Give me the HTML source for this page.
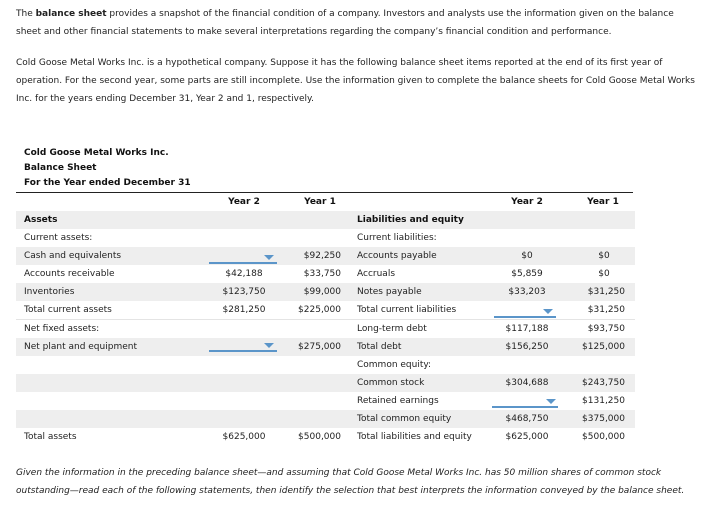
<!DOCTYPE html>
<html><head><meta charset="utf-8"><style>
*{margin:0;padding:0;box-sizing:border-box}
body{width:721px;height:526px;background:#fff;font-family:"DejaVu Sans","Liberation Sans",sans-serif;font-size:9px;color:#222;position:relative;overflow:hidden}
.p{position:absolute;left:16px;line-height:18px;white-space:nowrap}
.t{position:absolute;white-space:nowrap;line-height:18px}
.c2{position:absolute;width:80px;margin-left:-40px;text-align:center;white-space:nowrap;line-height:18px}
.row{position:absolute;left:16px;width:619px;height:18px}
.g{background:#eeeeee}
.dd{position:absolute;height:2px;background:#5b95c9}
.tri{position:absolute;width:0;height:0;border-left:5px solid transparent;border-right:5px solid transparent;border-top:5px solid #5b95c9}
b{font-weight:bold}
</style></head><body>
<div class="p" style="top:5px">The <b>balance sheet</b> provides a snapshot of the financial condition of a company. Investors and analysts use the information given on the balance<br>sheet and other financial statements to make several interpretations regarding the company’s financial condition and performance.</div>
<div class="p" style="top:54px">Cold Goose Metal Works Inc. is a hypothetical company. Suppose it has the following balance sheet items reported at the end of its first year of<br>operation. For the second year, some parts are still incomplete. Use the information given to complete the balance sheets for Cold Goose Metal Works<br>Inc. for the years ending December 31, Year 2 and 1, respectively.</div>

<div class="t" style="left:24px;top:146px;line-height:15px;font-weight:bold;color:#111">Cold Goose Metal Works Inc.<br>Balance Sheet<br>For the Year ended December 31</div>
<div style="position:absolute;left:16px;top:192px;width:617px;height:1px;background:#222"></div>
<div class="c2" style="left:244px;top:193px;font-weight:bold;color:#111">Year 2</div>
<div class="c2" style="left:320px;top:193px;font-weight:bold;color:#111">Year 1</div>
<div class="c2" style="left:527px;top:193px;font-weight:bold;color:#111">Year 2</div>
<div class="c2" style="left:603px;top:193px;font-weight:bold;color:#111">Year 1</div>

<div class="row g" style="top:211px"></div>
<div class="row g" style="top:247px"></div>
<div class="row g" style="top:283px"></div>
<div style="position:absolute;left:16px;top:319px;width:619px;height:1px;background:#e4e4e4"></div>
<div class="row g" style="top:338px"></div>
<div class="row g" style="top:374px"></div>
<div class="row g" style="top:410px"></div>

<div class="t" style="left:24px;top:211px;font-weight:bold;color:#111">Assets</div>
<div class="t" style="left:24px;top:229px">Current assets:</div>
<div class="t" style="left:24px;top:247px">Cash and equivalents</div>
<div class="t" style="left:24px;top:265px">Accounts receivable</div>
<div class="t" style="left:24px;top:283px">Inventories</div>
<div class="t" style="left:24px;top:301px">Total current assets</div>
<div class="t" style="left:24px;top:320px">Net fixed assets:</div>
<div class="t" style="left:24px;top:338px">Net plant and equipment</div>
<div class="t" style="left:24px;top:428px">Total assets</div>

<div class="dd" style="left:209px;top:262px;width:68px"></div><div class="tri" style="left:264px;top:255px"></div>
<div class="c2" style="left:244px;top:265px">$42,188</div>
<div class="c2" style="left:244px;top:283px">$123,750</div>
<div class="c2" style="left:244px;top:301px">$281,250</div>
<div class="dd" style="left:209px;top:350px;width:68px"></div><div class="tri" style="left:264px;top:343px"></div>
<div class="c2" style="left:244px;top:428px">$625,000</div>

<div class="t" style="right:380px;top:247px">$92,250</div>
<div class="t" style="right:380px;top:265px">$33,750</div>
<div class="t" style="right:380px;top:283px">$99,000</div>
<div class="t" style="right:380px;top:301px">$225,000</div>
<div class="t" style="right:380px;top:338px">$275,000</div>
<div class="t" style="right:380px;top:428px">$500,000</div>

<div class="t" style="left:357px;top:211px;font-weight:bold;color:#111">Liabilities and equity</div>
<div class="t" style="left:357px;top:229px">Current liabilities:</div>
<div class="t" style="left:357px;top:247px">Accounts payable</div>
<div class="t" style="left:357px;top:265px">Accruals</div>
<div class="t" style="left:357px;top:283px">Notes payable</div>
<div class="t" style="left:357px;top:301px">Total current liabilities</div>
<div class="t" style="left:357px;top:320px">Long-term debt</div>
<div class="t" style="left:357px;top:338px">Total debt</div>
<div class="t" style="left:357px;top:356px">Common equity:</div>
<div class="t" style="left:357px;top:374px">Common stock</div>
<div class="t" style="left:357px;top:392px">Retained earnings</div>
<div class="t" style="left:357px;top:410px">Total common equity</div>
<div class="t" style="left:357px;top:428px">Total liabilities and equity</div>

<div class="c2" style="left:527px;top:247px">$0</div>
<div class="c2" style="left:527px;top:265px">$5,859</div>
<div class="c2" style="left:527px;top:283px">$33,203</div>
<div class="dd" style="left:494px;top:316px;width:62px"></div><div class="tri" style="left:543px;top:309px"></div>
<div class="c2" style="left:527px;top:320px">$117,188</div>
<div class="c2" style="left:527px;top:338px">$156,250</div>
<div class="c2" style="left:527px;top:374px">$304,688</div>
<div class="dd" style="left:492px;top:406px;width:66px"></div><div class="tri" style="left:546px;top:399px"></div>
<div class="c2" style="left:527px;top:410px">$468,750</div>
<div class="c2" style="left:527px;top:428px">$625,000</div>

<div class="c2" style="left:604px;top:247px">$0</div>
<div class="c2" style="left:604px;top:265px">$0</div>
<div class="t" style="right:96px;top:283px">$31,250</div>
<div class="t" style="right:96px;top:301px">$31,250</div>
<div class="t" style="right:96px;top:320px">$93,750</div>
<div class="t" style="right:96px;top:338px">$125,000</div>
<div class="t" style="right:96px;top:374px">$243,750</div>
<div class="t" style="right:96px;top:392px">$131,250</div>
<div class="t" style="right:96px;top:410px">$375,000</div>
<div class="t" style="right:96px;top:428px">$500,000</div>

<div class="p" style="top:464px;font-style:italic">Given the information in the preceding balance sheet—and assuming that Cold Goose Metal Works Inc. has 50 million shares of common stock<br>outstanding—read each of the following statements, then identify the selection that best interprets the information conveyed by the balance sheet.</div>
</body></html>
